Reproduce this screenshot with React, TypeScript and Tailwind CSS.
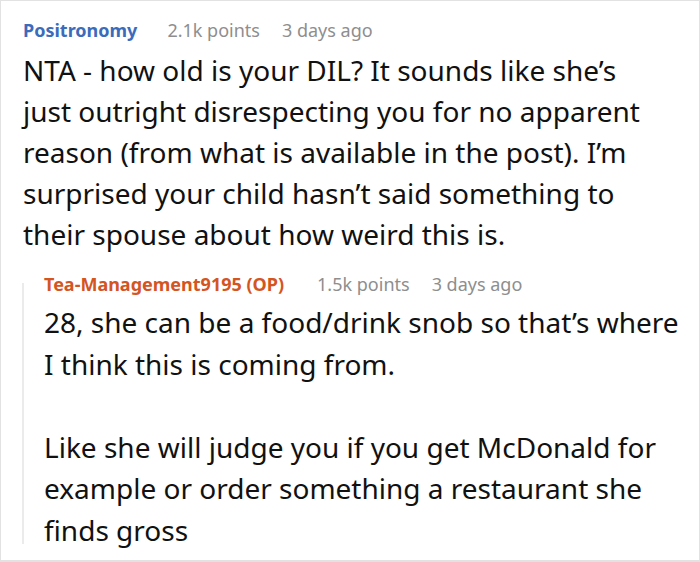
export default function App() {
  return (
    <div
      className="h-[562px] w-[700px] overflow-hidden border border-b-2 border-[#e2e2e2] bg-white pl-[22px] text-[#111]"
      style={{ fontFamily: '"Noto Sans", "Open Sans", sans-serif' }}
    >
      {/* Top comment */}
      <div className="pt-[17px]">
        <div className="flex items-baseline text-[18px] leading-[24px]">
          <span className="font-bold text-[#3b6cbc]">Positronomy</span>
          <span className="ml-[30px] text-[#8e8e8e]">2.1k points</span>
          <span className="ml-[22px] text-[#8e8e8e]">3 days ago</span>
        </div>
        <p className="mt-[8px] pr-[32px] text-[28px] leading-[41px]">
          NTA - how old is your DIL? It sounds like she’s just outright disrespecting you for no apparent reason (from
          what is available in the post). I’m surprised your child hasn’t said something to their spouse about how
          weird this is.
        </p>
      </div>

      {/* Reply */}
      <div className="relative -ml-px mt-[17px] h-[276px] pl-[22px] before:absolute before:bottom-[4px] before:left-0 before:top-[11px] before:w-[2px] before:bg-[#ebebeb]">
        <div className="flex items-baseline text-[18px] leading-[24px]">
          <span className="font-bold text-[#d4551f]">Tea-Management9195 (OP)</span>
          <span className="ml-[33px] text-[#8e8e8e]">1.5k points</span>
          <span className="ml-[22px] text-[#8e8e8e]">3 days ago</span>
        </div>
        <div className="mt-[6px] pr-[8px] text-[28px] leading-[41.6px]">
          <p>28, she can be a food/drink snob so that’s where I think this is coming from.</p>
          <p className="mt-[41.6px]">
            Like she will judge you if you get McDonald for example or order something a restaurant she finds gross
          </p>
        </div>
      </div>
    </div>
  );
}
